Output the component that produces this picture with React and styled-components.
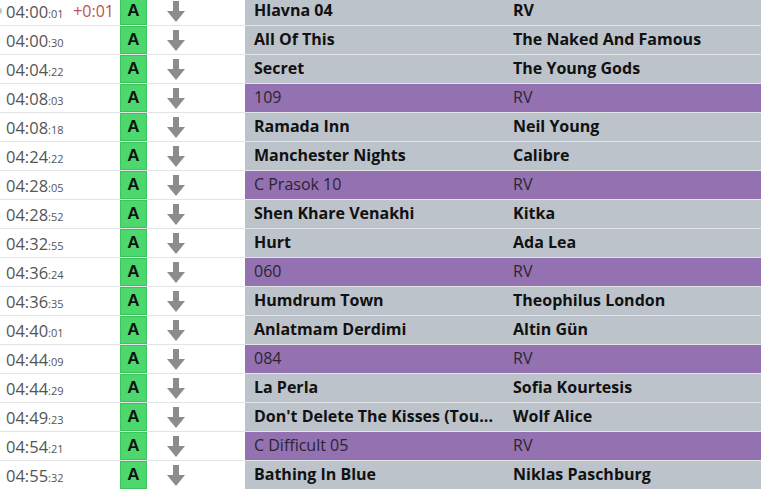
import React from 'react';
import styled, { createGlobalStyle } from 'styled-components';

const GlobalStyle = createGlobalStyle`
    html, body {
        margin: 0;
        padding: 0;
        background: #ffffff;
        overflow: hidden;
    }
    body {
        font-family: 'Open Sans', 'Noto Sans', sans-serif;
    }
`

const tracks = [
    { time: '04:00', sec: '01', delta: '+0:01', title: 'Hlavna 04', artist: 'RV', bold: true, marker: true },
    { time: '04:00', sec: '30', title: 'All Of This', artist: 'The Naked And Famous', bold: true },
    { time: '04:04', sec: '22', title: 'Secret', artist: 'The Young Gods', bold: true },
    { time: '04:08', sec: '03', title: '109', artist: 'RV', jingle: true },
    { time: '04:08', sec: '18', title: 'Ramada Inn', artist: 'Neil Young', bold: true },
    { time: '04:24', sec: '22', title: 'Manchester Nights', artist: 'Calibre', bold: true },
    { time: '04:28', sec: '05', title: 'C Prasok 10', artist: 'RV', jingle: true },
    { time: '04:28', sec: '52', title: 'Shen Khare Venakhi', artist: 'Kitka', bold: true },
    { time: '04:32', sec: '55', title: 'Hurt', artist: 'Ada Lea', bold: true },
    { time: '04:36', sec: '24', title: '060', artist: 'RV', jingle: true },
    { time: '04:36', sec: '35', title: 'Humdrum Town', artist: 'Theophilus London', bold: true },
    { time: '04:40', sec: '01', title: 'Anlatmam Derdimi', artist: 'Altin Gün', bold: true },
    { time: '04:44', sec: '09', title: '084', artist: 'RV', jingle: true },
    { time: '04:44', sec: '29', title: 'La Perla', artist: 'Sofia Kourtesis', bold: true },
    { time: '04:49', sec: '23', title: "Don't Delete The Kisses (Tou...", artist: 'Wolf Alice', bold: true },
    { time: '04:54', sec: '21', title: 'C Difficult 05', artist: 'RV', jingle: true },
    { time: '04:55', sec: '32', title: 'Bathing In Blue', artist: 'Niklas Paschburg', bold: true },
]

const DownArrow = () => (
    <svg width="18" height="21" viewBox="0 0 18 21">
        <path d="M6 0 H12 V10 H18 L9 21 L0 10 H6 Z" fill="#8c8c8c" />
    </svg>
)

const Row = ({ track }) => (
    <RowContainer>
        <TimeCell>
            {track.marker && <Marker />}
            <Time>{track.time}<Sec>:{track.sec}</Sec></Time>
            {track.delta && <Delta>{track.delta}</Delta>}
        </TimeCell>
        <Badge>A</Badge>
        <ArrowCell><DownArrow /></ArrowCell>
        <TextCell jingle={track.jingle} bold={track.bold}>{track.title}</TextCell>
        <TextCell jingle={track.jingle} bold={track.bold}>{track.artist}</TextCell>
    </RowContainer>
)

const App = () => {
    return (
        <>
            <GlobalStyle />
            <List>
                {tracks.map((t, i) => <Row key={i} track={t} />)}
            </List>
        </>
    );
};

const List = styled.div`
    margin-top: -3px;
    width: 761px;
`

const RowContainer = styled.div`
    display: grid;
    grid-template-columns: 120px 27px 98px 259px 1fr;
    height: 28px;
    border-bottom: 1px solid #e2e4e6;
`

const TimeCell = styled.div`
    position: relative;
    display: flex;
    align-items: center;
    justify-content: space-between;
    padding: 0 6px 0 6px;
    overflow: hidden;
`

const Marker = styled.span`
    position: absolute;
    left: -4px;
    top: 11px;
    width: 6px;
    height: 6px;
    border-radius: 50%;
    background: #b8c2cc;
`

const Time = styled.span`
    font-size: 16.5px;
    color: #555555;
`

const Sec = styled.span`
    font-size: 11px;
`

const Delta = styled.span`
    font-size: 16px;
    color: #c0504d;
`

const Badge = styled.div`
    display: flex;
    align-items: center;
    justify-content: center;
    background: #4cd86c;
    box-shadow: inset 0 0 0 1px #3ec45e;
    font-family: 'Liberation Sans', Arial, sans-serif;
    font-weight: 700;
    font-size: 17px;
    color: #111111;
`

const ArrowCell = styled.div`
    display: flex;
    align-items: center;
    padding-left: 20px;
`

const TextCell = styled.div`
    display: block;
    padding: 0 8px 0 9px;
    min-width: 0;
    background: ${props => props.jingle ? '#9471b1' : '#bcc3ca'};
    color: ${props => props.jingle ? '#2a2530' : '#111111'};
    font-weight: ${props => props.bold ? 700 : 400};
    font-size: 16px;
    line-height: 27px;
    white-space: nowrap;
    overflow: hidden;
    text-overflow: ellipsis;
`

export default App;
